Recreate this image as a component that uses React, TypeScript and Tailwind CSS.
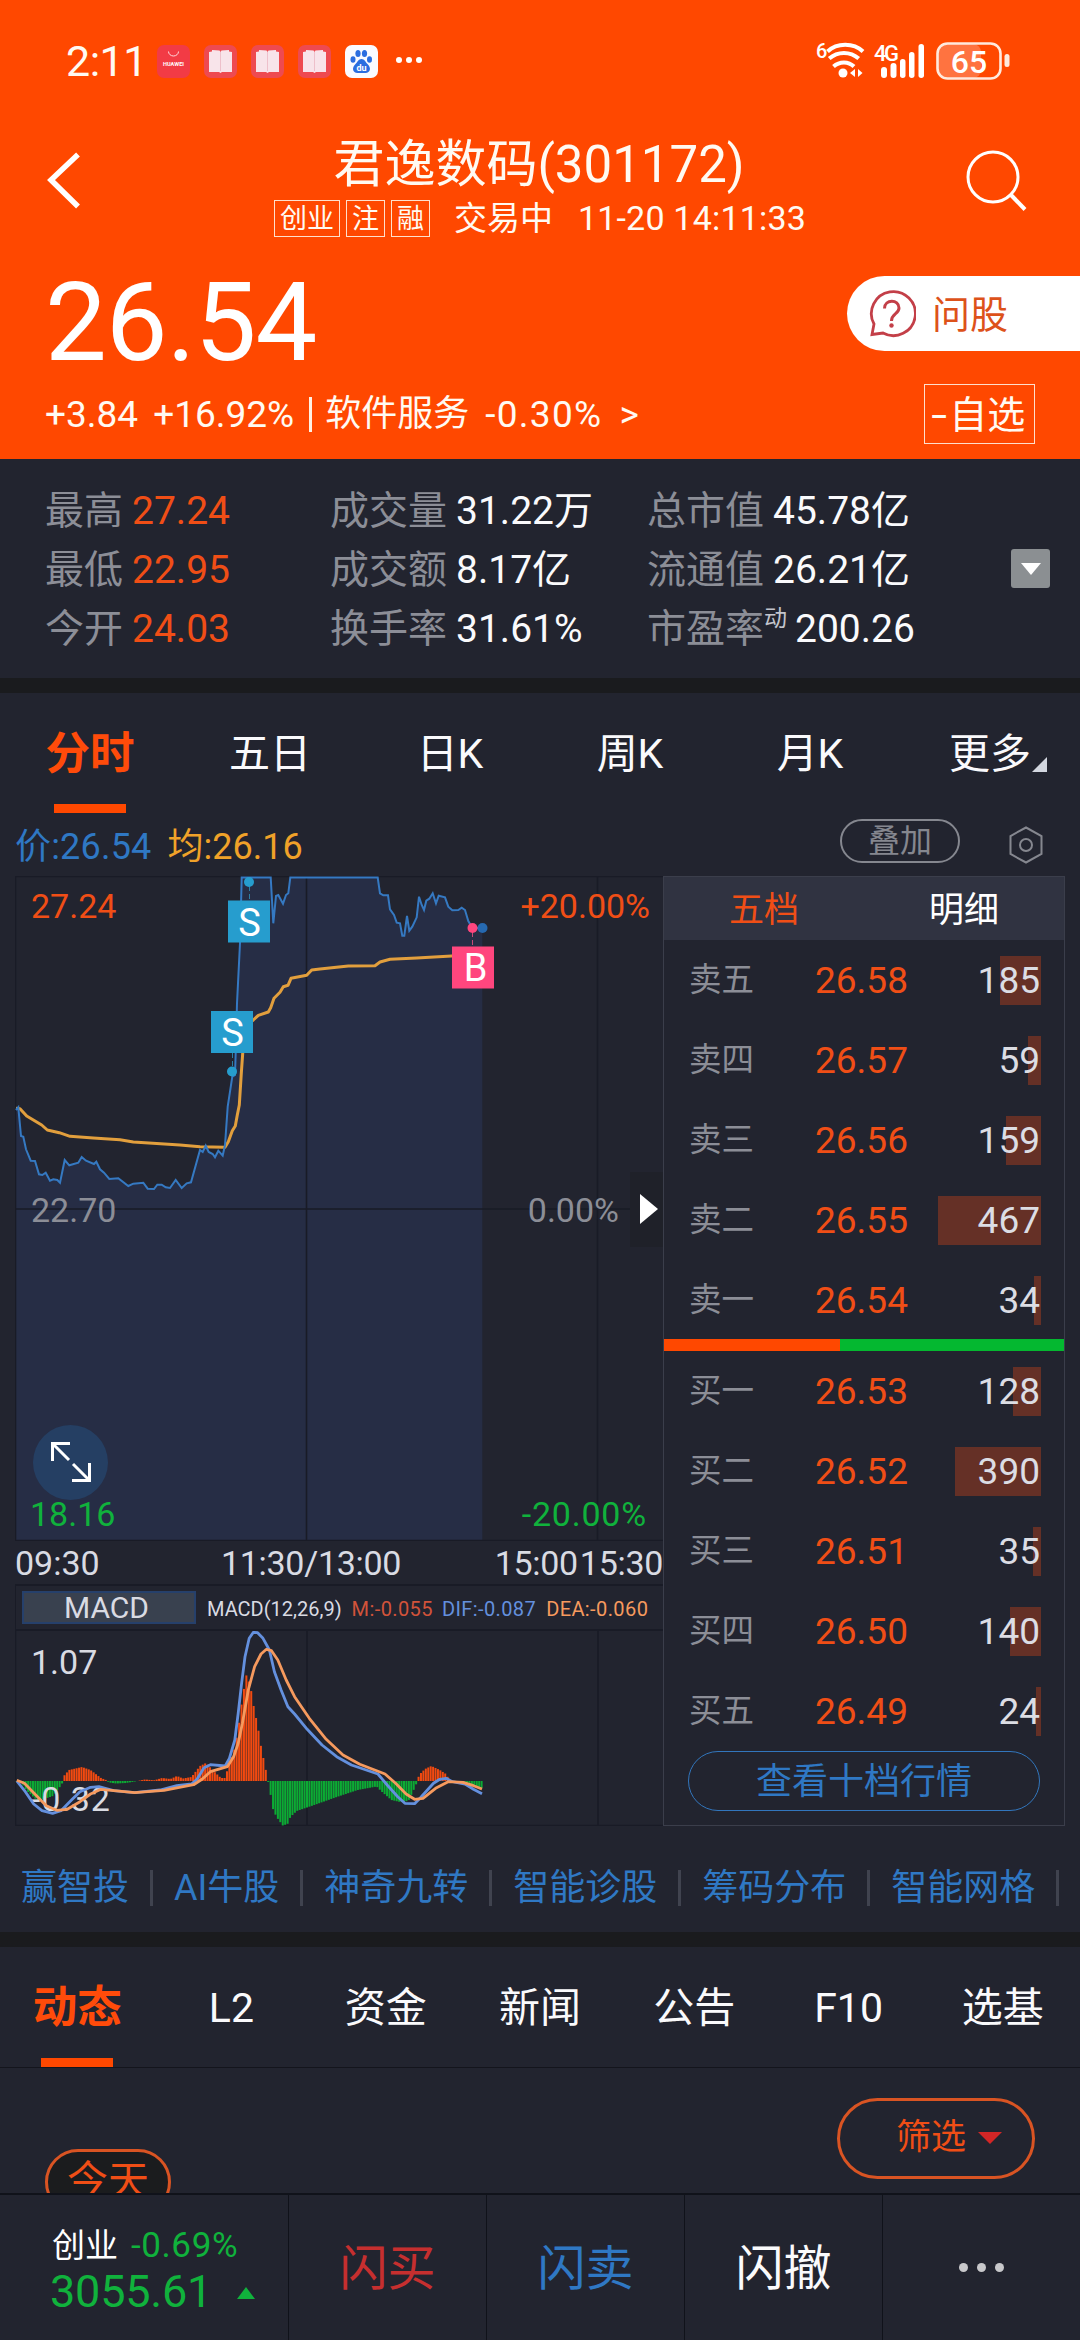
import React, { useState } from "react";

interface Level {
    label: string;
    price: string;
    volume: number;
}

interface Stat {
    label: string;
    value: string;
    note?: string;
}

const statColumns: { items: Stat[]; className: string; valueClass: string }[] = [
    {
        className: "w-[285px]",
        valueClass: "text-[#f04e16]",
        items: [
            { label: "最高", value: "27.24" },
            { label: "最低", value: "22.95" },
            { label: "今开", value: "24.03" },
        ],
    },
    {
        className: "w-[317px]",
        valueClass: "text-[#fafafc]",
        items: [
            { label: "成交量", value: "31.22万" },
            { label: "成交额", value: "8.17亿" },
            { label: "换手率", value: "31.61%" },
        ],
    },
    {
        className: "w-[364px]",
        valueClass: "text-[#fafafc]",
        items: [
            { label: "总市值", value: "45.78亿" },
            { label: "流通值", value: "26.21亿" },
            { label: "市盈率", value: "200.26", note: "动" },
        ],
    },
];

const periods = ["分时", "五日", "日K", "周K", "月K", "更多"];
const sections = ["动态", "L2", "资金", "新闻", "公告", "F10", "选基"];
const tools = ["赢智投", "AI牛股", "神奇九转", "智能诊股", "筹码分布", "智能网格"];

const asks: Level[] = [
    { label: "卖五", price: "26.58", volume: 185 },
    { label: "卖四", price: "26.57", volume: 59 },
    { label: "卖三", price: "26.56", volume: 159 },
    { label: "卖二", price: "26.55", volume: 467 },
    { label: "卖一", price: "26.54", volume: 34 },
];

const bids: Level[] = [
    { label: "买一", price: "26.53", volume: 128 },
    { label: "买二", price: "26.52", volume: 390 },
    { label: "买三", price: "26.51", volume: 35 },
    { label: "买四", price: "26.50", volume: 140 },
    { label: "买五", price: "26.49", volume: 24 },
];

const priceLine =
    "1,234 3.3,231.3 6,260 8.3,260.7 11,273.3 15.7,284.7 20,285 24,298.3 27.3,299 30.7,296.7 35,304.7 38.3,303.3 42.3,304 45,306.7 49.7,284 54.3,289.3 63.3,286.7 66.7,281 71,284.7 79,288 81.3,285.7 85,293.3 89,296.7 94.3,303 103.3,302.3 113.3,310 118.3,307.7 128.3,306.7 132.7,312.7 139,313 142.3,308.7 146.7,308.7 150.7,311.3 155,312 160.7,304 166.7,312 171.7,307.3 176,306.3 185,274 187.7,276 190.7,269.7 193.7,276 197.7,278 200,281.3 203.3,274.7 207.7,279.7 210,269 212.7,230.7 215,215.7 217.3,200.7 220,199 221,167 222,127.3 225,67.3 226.7,1.5 255.7,1.5 258.3,47.3 261,20 263.3,19 268,27.7 271,19 273.3,17.3 275.3,1.5 362.7,1.5 365,17.3 368.3,19.3 373,19.3 375,33.3 379,39 381.7,46.7 385,47.3 387.3,59.7 389.3,59.7 392,40 394.3,54.7 397.3,50.7 401.7,41.3 404,20.7 406.7,29 409,34 411.3,24.7 414.3,22.7 417.7,17.3 421,27.3 423.7,19.7 430,21.3 433.3,30.7 437.3,34.3 443.3,34 446.7,31.7 450,34 453.3,45 457.3,52 467.3,52";

const averageLine =
    "1,232.3 5,232.7 11.7,240 26.7,249 32.3,254 44.3,256.7 55,260.3 78.3,262 105,263.7 118.3,266 165,269 185,270.7 210,271.3 213.3,265.7 217.3,254.7 220.3,250 222.3,239 224.3,229 226.3,197.3 227.7,177.3 230,150.7 238.3,144 243.3,139.3 253.3,136 255.7,131.7 259,122.3 265,116.3 268.3,110.7 273,109.3 276,102.3 291.7,99.3 296.7,94 305,93 333.3,90 360,89.7 365,86 375,83.3 401.7,82 436.7,80 467,79";

const difLine =
    "1.8,150 10.3,160.7 18.7,173 27,179.7 37.6,182.3 46,179.7 56.5,169 65,160.7 75.5,156.3 83.9,155.7 98.6,159.7 119.7,161.7 145,159 161.8,154.7 176.5,153 182,148.3 189,136.7 195.4,133.7 210.2,135 214.4,127.3 219.8,109 223.2,82.3 226.6,52.3 230,25.7 234.2,7.3 238.4,1.3 242.6,1.7 248,7.3 254.4,19 259.4,40.7 266.1,59 272.9,75.7 279.6,83 292.2,98.3 307,114 321.7,125.7 336.4,134 351.2,139 362.9,143 372.2,154 382.7,165.7 389.9,172.3 399.6,172.7 405.9,166.3 418.5,152.3 424.8,148.3 431,147.3 437.4,150.7 450,153 458.5,158.3 467,162.7";

const deaLine =
    "1.8,149.3 9.4,152.3 20.8,164 31.3,174.7 41.8,179.3 52.3,178.3 65,170.7 75.5,163 86,158.3 119.7,161.7 149,159.3 178.6,153.7 187,148.3 195.4,140.7 212.3,135.7 218.6,125.7 223.2,112.3 227.4,92.3 233.3,59 239.6,35.7 246,23 251.4,18.3 256.5,19.7 262.8,29 271.2,49 279.6,65.7 294.3,87.3 311.2,108.3 328,124 344.8,133.3 361.7,139.7 370,143 380.6,152.3 391.1,163 399.6,168.3 408,167.3 420.6,157.3 433.2,150.7 448,151.3 458.5,154.7 467,158";

// [x, height] of the MACD histogram, one bar per minute is interpolated from it
const histogram = [
    [0, 0], [6, -1], [12, -10], [23, -20], [38, -15], [47, -3], [48, 4], [54, 11], [67, 14], [75.5, 11], [86, 3], [91, 1],
    [94, -1.5], [101, -2.5], [111, -2], [120, -0.5], [130, 1.5], [139, 0.7], [147, 3], [155.5, 2], [162, 5],
    [168, 2.5], [176.5, 4], [185, 15], [191, 18], [197.5, 11], [206, 3], [210, 3], [214.4, 18], [218.6, 28], [223, 50],
    [227, 80], [231.2, 106], [234, 99], [236.7, 88], [238.8, 74], [241.7, 60], [244.3, 46], [246.4, 32],
    [249, 20], [251.4, 8], [253, 0], [254.8, -9], [258, -28], [261.5, -36], [267.8, -44.5], [272.5, -43],
    [275.4, -36], [281.7, -30], [296.4, -25], [321.7, -16], [342.7, -9], [361.7, -5.5], [366, -10],
    [376.4, -19], [385, -21], [393.3, -20], [399.6, -7], [402.5, 0], [404, 6], [410, 12], [416.4, 15],
    [424.8, 11], [431, 7], [434.5, 1], [439.5, -1], [452, -2.5], [460.6, -5], [470, -8],
];

const barHeight = (x: number) => {
    const next = histogram.findIndex((p) => p[0] > x);
    const [x0, h0] = histogram[next - 1];
    const [x1, h1] = histogram[next];
    return h0 + ((h1 - h0) * (x - x0)) / (x1 - x0);
};

const bars = Array.from({ length: 193 }, (_, i) => ({ x: i * 2.425, h: barHeight(i * 2.425 + 1) }));

const StatusBar = () => (
    <div className="flex h-[122px] items-center pl-[66px] pr-[70px]">
        <span className="w-[91px] text-[43px] leading-none tracking-[-0.5px]">2:11</span>
        <div className="flex gap-[14px]">
            <svg width="33" height="33" viewBox="0 0 33 33">
                <rect width="33" height="33" rx="7" fill="#f23b45" />
                <path d="M11.5 6.5a5 4.5 0 0 0 10 0" fill="none" stroke="#ffd9dc" strokeWidth="1" />
                <text x="16.5" y="21" fontSize="5.6" fontWeight="700" fill="#fff" textAnchor="middle">HUAWEI</text>
            </svg>
            {[0, 1, 2].map((n) => (
                <svg key={n} width="33" height="33" viewBox="0 0 33 33">
                    <rect width="33" height="33" rx="7" fill="#ee4a50" />
                    <path d="M5 7l3-.5V5l7.5 .5L16.5 7l1-1.5L25 5v1.5l3 .5v20H18l-1.5 1-1.5-1H5z" fill="#f8e4ea" />
                    <path d="M16.5 7v19" stroke="#eec0cb" strokeWidth="1" />
                </svg>
            ))}
            <svg width="33" height="33" viewBox="0 0 33 33">
                <rect width="33" height="33" rx="7" fill="#fafaff" />
                <g fill="#2b6de0">
                    <ellipse cx="8" cy="14.5" rx="2.5" ry="3.3" />
                    <ellipse cx="13" cy="8.5" rx="2.6" ry="3.5" />
                    <ellipse cx="19.5" cy="8.5" rx="2.6" ry="3.5" />
                    <ellipse cx="24.5" cy="14.5" rx="2.5" ry="3.3" />
                    <path d="M16.5 14c3 0 4 3 6 5 4 3.5 3 9-2 9h-8c-5 0-6-5.5-2-9 2-2 3-5 6-5z" />
                </g>
                <text x="16.5" y="26" fontSize="9" fontWeight="700" fill="#fff" textAnchor="middle">du</text>
            </svg>
        </div>
        <svg className="ml-[17px]" width="28" height="8" viewBox="0 0 28 8" fill="#fff">
            <circle cx="4" cy="3" r="3" />
            <circle cx="14" cy="3" r="3" />
            <circle cx="24" cy="3" r="3" />
        </svg>
        <svg className="ml-auto overflow-visible" width="194" height="40" viewBox="0 0 194 40">
            <text x="0" y="17" fontSize="20" fontWeight="500" fill="#fff">6</text>
            <g fill="none" stroke="#fff" strokeWidth="4">
                <path d="M11.5 10.5c9.5-9 26-9 35.5 0" />
                <path d="M13.2 17.5c8.5-7.5 21-7.5 29.5 0" />
                <path d="M17.5 25.5c6-5.5 15-5.5 20.5 0" />
            </g>
            <circle cx="27" cy="32" r="4.5" fill="#fff" />
            <path d="M39 28v8l-5-4zM42 28l4.5 4-4.5 4z" fill="#fff" />
            <text x="58" y="19.5" fontSize="22" fontWeight="500" fill="#fff" textLength="25">4G</text>
            <g fill="#fff">
                <rect x="65" y="26" width="6" height="11" rx="3" />
                <rect x="74.5" y="22" width="6" height="15" rx="3" />
                <rect x="84" y="18" width="5.5" height="19" rx="2.7" />
                <rect x="93" y="11" width="5.5" height="26" rx="2.7" />
                <rect x="102.5" y="3" width="5.5" height="34" rx="2.7" />
            </g>
            <rect x="122" y="3" width="43" height="34" rx="8" fill="#ff7340" />
            <rect x="121.5" y="2.5" width="63" height="35" rx="10" fill="none" stroke="#ffe9dd" strokeWidth="2.6" />
            <rect x="188.5" y="13" width="5" height="13" rx="2.5" fill="#ffe9dd" />
            <text x="153" y="32" fontSize="32" fontWeight="500" fill="#fff" textAnchor="middle">65</text>
        </svg>
    </div>
);

const Header = () => (
    <header className="h-[459px] bg-[#ff4800] text-[#fffaf2]">
        <StatusBar />
        <div className="flex h-[123px] justify-between pl-[46px] pr-[53px]">
            <svg className="mr-[31px] mt-[29px]" width="36" height="60" viewBox="0 0 36 60">
                <path d="M32 3.5L5 29L32 55.5" fill="none" stroke="#fff" strokeWidth="5.5" />
            </svg>
            <div className="flex flex-col items-center">
                <h1 className="mt-[15px] text-[51px] leading-[56px]">君逸数码(301172)</h1>
                <div className="mt-[5px] flex h-[40px] items-center pl-[2px] text-[34px] leading-none">
                    <span className="h-[37px] border border-[#ffe0cc] px-[5px] pt-[5px] text-[27px] leading-none">创业</span>
                    <span className="ml-[6px] h-[37px] border border-[#ffe0cc] px-[5px] pt-[5px] text-[27px] leading-none">注</span>
                    <span className="ml-[6px] h-[37px] border border-[#ffe0cc] px-[5px] pt-[5px] text-[27px] leading-none">融</span>
                    <span className="ml-[24px] text-[33px]">交易中</span>
                    <span className="ml-[25px] tracking-[0.2px]">11-20 14:11:33</span>
                </div>
            </div>
            <svg className="mt-[27px]" width="62" height="64" viewBox="0 0 62 64" fill="none" stroke="#fff" strokeWidth="3">
                <circle cx="28" cy="28" r="25" />
                <path d="M46 46L60 60.5" strokeWidth="4" />
            </svg>
        </div>
        <div className="flex h-[139px] items-start justify-between pl-[45px]">
            <span className="mt-[23px] text-[110px] leading-none tracking-[-1px] text-white">26.54</span>
            <div className="mt-[31px] flex h-[75px] w-[233px] items-center rounded-l-full bg-white pl-[21px] text-[38px] leading-none text-[#dd521a]">
                <svg width="48" height="50" viewBox="0 0 48 50" fill="none" stroke="#c33f48" strokeWidth="2.8">
                    <path d="M6 35A22 22 0 1 1 15 44L4 45.5L6 35z" />
                    <path d="M16.5 19.5c0-9.5 14.5-9.5 14.5-.5 0 6-7.5 5.5-7.5 13" strokeWidth="3" />
                    <circle cx="23.5" cy="36.5" r="2.2" fill="#c33f48" stroke="none" />
                </svg>
                <span className="ml-[16px] mt-[3px]">问股</span>
            </div>
        </div>
        <div className="flex h-[60px] items-center pl-[45px] pr-[45px] text-[37px] leading-none">
            <span>+3.84</span>
            <span className="ml-[15px]">+16.92%</span>
            <span className="ml-[15px] h-[35px] w-[3px] bg-[#fff0e4]" />
            <span className="ml-[13px] text-[36px]">软件服务</span>
            <span className="ml-[16px] tracking-[1.3px]">-0.30%</span>
            <span className="ml-[17px]">&gt;</span>
            <span className="ml-auto flex h-[60px] w-[111px] items-center justify-center border border-[#ffe0cc] pt-px text-[38px]">
                <span className="mr-[5px] scale-x-150">-</span>
                自选
            </span>
        </div>
    </header>
);

const Stats = () => (
    <div className="flex h-[219px] pl-[45px] pt-[23px] text-[39px]">
        {statColumns.map((column, i) => (
            <div key={i} className={column.className}>
                {column.items.map((item) => (
                    <div key={item.label} className="flex h-[59px] items-center leading-none">
                        <span className="text-[#8c8e97]">{item.label}</span>
                        {item.note && <span className="-mr-[1px] mb-[22px] text-[23px] text-[#c3c5cd]">{item.note}</span>}
                        <span className={`ml-[9px] ${column.valueClass}`}>{item.value}</span>
                    </div>
                ))}
            </div>
        ))}
        <div className="mt-[67px] flex h-[39px] w-[39px] items-center justify-center rounded-[3px] bg-[#8b8f92]">
            <svg width="20" height="12" viewBox="0 0 20 12" fill="#fff">
                <path d="M0 0h20L10 12z" />
            </svg>
        </div>
    </div>
);

const PeriodTabs = ({ active, onSelect }: { active: string; onSelect: (name: string) => void }) => (
    <nav className="flex h-[120px]">
        {periods.map((name) => (
            <button key={name} onClick={() => onSelect(name)} className="relative flex flex-1 flex-col items-center pt-[33px]">
                <span className={name === active ? "text-[44.5px] font-bold leading-[56px] text-[#ff4b0a]" : "text-[41px] leading-[56px] text-[#fafafc]"}>{name}</span>
                {name === active && <span className="mt-auto h-[9px] w-[72px] bg-[#ff4800]" />}
                {name === "更多" && (
                    <svg className="absolute left-[132px] top-[64px]" width="15" height="15" viewBox="0 0 15 15" fill="#d3d7e0">
                        <path d="M15 0v15H0z" />
                    </svg>
                )}
            </button>
        ))}
    </nav>
);

const Legend = () => (
    <div className="flex h-[63px] items-center pl-[15px] pr-[37px] text-[36px] leading-none">
        <span className="mt-[4px] tracking-[0.2px] text-[#2f78c4]">价:26.54</span>
        <span className="ml-[16px] mt-[4px] text-[#f0a229]">均:26.16</span>
        <span className="-mt-[7px] ml-auto flex h-[44px] w-[120px] items-center justify-center rounded-full border-2 border-[#85878f] text-[32px] text-[#85878f]">叠加</span>
        <svg className="ml-[49px]" width="34" height="38" viewBox="0 0 34 38" fill="none" stroke="#85878f" strokeWidth="2">
            <path d="M17 1.5L32.5 10v18L17 36.5L1.5 28V10z" />
            <circle cx="17" cy="19" r="6" />
        </svg>
    </div>
);

const PriceChart = () => (
    <div className="relative h-[665px]">
        <svg width="648" height="665" viewBox="0 0 648 665" fontSize="34">
            <polygon points={`1,665 ${priceLine} 467.3,665`} fill="#262d45" />
            <path d="M0 .5H648M.5 0V665M291.5 0V665M582.5 0V665M0 333H648M0 664.5H648" stroke="#191b26" strokeWidth="1.6" fill="none" />
            <rect x="615" y="296" width="33" height="75" fill="#1f2129" />
            <polyline points={averageLine} fill="none" stroke="#e29f3d" strokeWidth="3" strokeLinejoin="round" />
            <polyline points={priceLine} fill="none" stroke="#3579c2" strokeWidth="2" />
            <g stroke="#2d7fa5" strokeWidth="1" strokeDasharray="5 3">
                <path d="M234.5 10v15M217.5 177v16" />
                <path d="M457.5 56v14" stroke="#c94a78" />
            </g>
            <circle cx="234" cy="6" r="5" fill="#269dce" />
            <circle cx="217" cy="195.5" r="5" fill="#269dce" />
            <circle cx="467.5" cy="52" r="5" fill="#2669b0" />
            <circle cx="457.5" cy="52" r="5" fill="#ff467e" />
            <g fontSize="38" textAnchor="middle" fill="#fff">
                <rect x="213" y="24.5" width="42" height="42" fill="#269dce" />
                <text x="234.5" y="59.5">S</text>
                <rect x="196" y="135" width="42" height="42" fill="#269dce" />
                <text x="217.5" y="170">S</text>
                <rect x="437" y="70.5" width="42" height="42" fill="#ff467e" />
                <text x="460.5" y="105">B</text>
            </g>
            <text x="16" y="42" fill="#f04e16">27.24</text>
            <text x="16" y="346" fill="#8c8e97">22.70</text>
            <text x="15" y="650" fill="#10b23c">18.16</text>
            <g textAnchor="end">
                <text x="635" y="42" fill="#f04e16">+20.00%</text>
                <text x="604" y="346" fill="#8c8e97">0.00%</text>
                <text x="632" y="650" fill="#10b23c" letterSpacing=".8">-20.00%</text>
            </g>
            <path d="M625 318v30l18-15z" fill="#fff" />
        </svg>
        <div className="absolute left-[18px] top-[549px] flex h-[75px] w-[75px] items-center justify-center rounded-full bg-[#253f63] pb-[2px]">
            <svg width="40" height="40" viewBox="0 0 40 40" fill="none" stroke="#fff" strokeWidth="3">
                <path d="M1.5 19V1.5H19M1.5 1.5L18 18M22 22L38.5 38.5M38.5 21V38.5H21" />
            </svg>
        </div>
    </div>
);

const MacdChart = () => (
    <svg width="648" height="195" viewBox="0 0 648 195" fontSize="34">
        <path d="M.5 0V195M0 194.5H648M292 0V195M583 0V195" stroke="#191b26" strokeWidth="1.6" fill="none" />
        {bars.map((bar) => (
            <rect
                key={bar.x}
                x={bar.x}
                y={bar.h > 0 ? 150 - bar.h : 150}
                width="2"
                height={Math.abs(bar.h)}
                fill={bar.h > 0 ? "#f24a10" : "#0cab34"}
            />
        ))}
        <text x="16" y="43" fill="#d9dbe3">1.07</text>
        <text x="16" y="180" fill="#d9dbe3" letterSpacing=".8">-0.32</text>
        <polyline points={difLine} fill="none" stroke="#6490de" strokeWidth="2.8" strokeLinejoin="round" />
        <polyline points={deaLine} fill="none" stroke="#f69a5e" strokeWidth="2.8" strokeLinejoin="round" />
    </svg>
);

const Charts = () => (
    <div className="flex w-[648px] flex-col">
        <PriceChart />
        <div className="flex h-[43px] items-center pt-px text-[34px] leading-none text-[#d9dbe3]">
            <span className="w-[206px]">09:30</span>
            <span className="flex-1 tracking-[-0.3px]">11:30/13:00</span>
            <span className="tracking-[-0.3px]">15:00</span>
            <span className="ml-[2px] tracking-[-0.3px]">15:30</span>
        </div>
        <div className="flex h-[47px] items-center border-y-2 border-l border-[#191b26] pl-[6px] text-[20px] leading-none">
            <span className="flex h-[33px] w-[174px] items-center justify-center border-2 border-[#26406b] bg-[#39414f] pr-[5px] pt-px text-[30px] text-[#d9dbe3]">MACD</span>
            <span className="ml-[11px] mt-[2px] text-[#d9dbe3]">MACD(12,26,9)</span>
            <span className="ml-[10px] mt-[2px] tracking-[0.4px] text-[#d2533a]">M:-0.055</span>
            <span className="ml-[9px] mt-[2px] tracking-[0.4px] text-[#6490de]">DIF:-0.087</span>
            <span className="ml-[10px] mt-[2px] tracking-[0.4px] text-[#f69a5e]">DEA:-0.060</span>
        </div>
        <MacdChart />
    </div>
);

const LevelRow = ({ level }: { level: Level }) => (
    <div className="flex h-[80px] items-center pl-[25px] pr-[23px] leading-none">
        <span className="w-[126px] text-[32.5px] text-[#8c8e97]">{level.label}</span>
        <span className="text-[37px] text-[#f04e16]">{level.price}</span>
        <span className="relative ml-auto flex h-[49px] w-[110px] items-center justify-end text-[37px] text-[#dcdde4]">
            <span className="absolute right-0 top-0 h-full bg-[#653026]" style={{ width: Math.round(level.volume * 0.22) }} />
            <span className="relative pr-[1px]">{level.volume}</span>
        </span>
    </div>
);

const OrderBook = () => (
    <div className="h-[950px] w-[402px] border border-[#3b3e4b]">
        <div className="flex h-[63px] items-center bg-[#303341] pt-[3px] text-[35px] leading-none">
            <span className="flex-1 text-center text-[#f04e16]">五档</span>
            <span className="flex-1 text-center text-white">明细</span>
        </div>
        <div className="h-[399px]">
            {asks.map((level) => (
                <LevelRow key={level.label} level={level} />
            ))}
        </div>
        <div className="flex h-[12px] bg-[#04b830]">
            <div className="w-[176px] bg-[#ff4800]" />
        </div>
        {bids.map((level) => (
            <LevelRow key={level.label} level={level} />
        ))}
        <button className="ml-[24px] flex h-[60px] w-[352px] items-center justify-center rounded-full border border-[#3276bd] pt-[2px] text-[36px] leading-none text-[#2f78c4]">查看十档行情</button>
    </div>
);

const Toolbar = () => (
    <div className="flex h-[106px] items-center gap-[21px] overflow-hidden whitespace-nowrap pl-[21px] pt-[17px] text-[36px] leading-none text-[#2f78c4]">
        {tools.map((tool) => (
            <React.Fragment key={tool}>
                <span className="shrink-0 pt-px">{tool}</span>
                <span className="h-[36px] w-[3px] shrink-0 bg-[#40434f]" />
            </React.Fragment>
        ))}
    </div>
);

const SectionTabs = () => {
    const [active, setActive] = useState("动态");

    return (
        <nav className="flex h-[121px] border-b border-[#14151d]">
            {sections.map((name) => (
                <button key={name} onClick={() => setActive(name)} className="flex flex-1 flex-col items-center pt-[33px]">
                    <span className={name === active ? "text-[44.5px] font-bold leading-[56px] text-[#ff4b0a]" : "text-[41px] leading-[56px] text-[#fafafc]"}>{name}</span>
                    {name === active && <span className="mt-auto h-[9px] w-[72px] bg-[#ff4800]" />}
                </button>
            ))}
        </nav>
    );
};

const Feed = () => (
    <div className="flex h-[125px] items-start justify-between overflow-hidden px-[45px]">
        <span className="mt-[81px] flex h-[66px] w-[126px] items-center justify-center rounded-full border-[3px] border-[#d95423] bg-[#1b1c1e] pb-[2px] text-[41px] leading-none text-[#f04e16]">今天</span>
        <button className="mt-[30px] flex h-[81px] w-[198px] items-center rounded-full border-[3px] border-[#d95423] pb-[2px] pl-[56px] text-[35px] leading-none text-[#f04e16]">
            筛选
            <svg className="ml-[12px]" width="24" height="12" viewBox="0 0 24 12" fill="#d32626">
                <path d="M0 0h24L12 12z" />
            </svg>
        </button>
    </div>
);

const BottomBar = () => (
    <footer className="flex h-[147px] border-t-2 border-[#10121a] text-[48px] leading-none">
        <div className="flex w-[288px] flex-col pl-[50px] pt-[33px] text-[#10b23c]">
            <div className="flex items-center pl-[2px] text-[35px] leading-[36px]">
                <span className="text-[33px] text-white">创业</span>
                <span className="ml-[13px] tracking-[0.6px]">-0.69%</span>
            </div>
            <div className="mt-[5px] flex items-center text-[45px] leading-[46px]">
                <span className="tracking-[-0.2px]">3055.61</span>
                <svg className="ml-[25px] mt-[2px]" width="18" height="12" viewBox="0 0 18 12" fill="#10b23c">
                    <path d="M9 0l9 12H0z" />
                </svg>
            </div>
        </div>
        <button className="w-[198px] border-l border-[#10121a] pt-[2px] text-[#c62f2f]">闪买</button>
        <button className="w-[198px] border-l border-[#10121a] pt-[2px] text-[#2f78c4]">闪卖</button>
        <button className="w-[198px] border-l border-[#10121a] pt-[2px] text-[#fafafc]">闪撤</button>
        <button className="flex flex-1 items-center justify-center gap-[9px] border-l border-[#10121a]">
            <span className="h-[9px] w-[9px] rounded-full bg-[#c8c8cb]" />
            <span className="h-[9px] w-[9px] rounded-full bg-[#c8c8cb]" />
            <span className="h-[9px] w-[9px] rounded-full bg-[#c8c8cb]" />
        </button>
    </footer>
);

const App = () => {
    const [period, setPeriod] = useState("分时");

    return (
        <div className="h-[2340px] w-[1080px] overflow-hidden bg-[#22242f] font-[Roboto,'Noto_Sans_CJK_SC',sans-serif]">
            <Header />
            <Stats />
            <div className="h-[15px] bg-[#1a1b1e]" />
            <PeriodTabs active={period} onSelect={setPeriod} />
            <Legend />
            <div className="flex pl-[15px]">
                <Charts />
                <OrderBook />
            </div>
            <Toolbar />
            <div className="h-[15px] bg-[#1a1b1e]" />
            <SectionTabs />
            <Feed />
            <BottomBar />
        </div>
    );
};

export default App;
